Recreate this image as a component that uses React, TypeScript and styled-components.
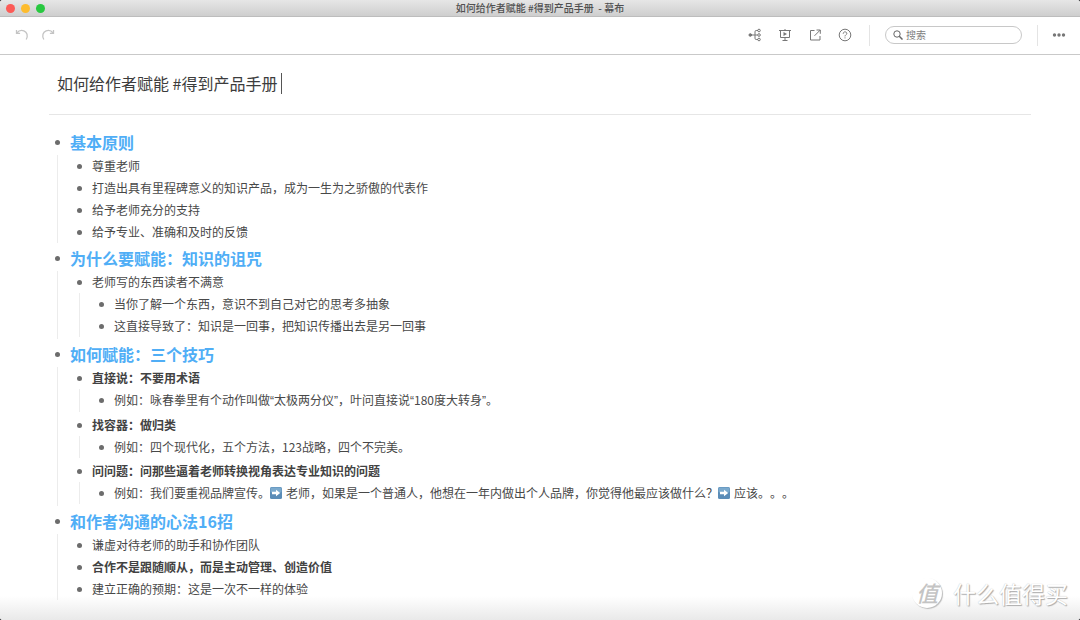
import React from "react";
import styled, { createGlobalStyle } from "styled-components";

const GlobalStyle = createGlobalStyle`
  * { box-sizing: border-box; }
  body {
    margin: 0;
    background: #2b2b2f;
    color: #444;
    font-family: "Noto Sans CJK SC", "Noto Sans", sans-serif;
    font-size: 12px;
    text-spacing-trim: space-all;
  }
`;

const Window = styled.div`
  position: relative;
  display: flex;
  flex-direction: column;
  min-height: 100vh;
  border-radius: 3px;
  overflow: hidden;
  background: #fff;
`;

const TitleBar = styled.header`
  display: grid;
  grid-template-columns: 1fr auto 1fr;
  align-items: center;
  height: 17px;
  padding: 0 6px;
  background: linear-gradient(#e6e6e6, #cecece);
  border-bottom: 1px solid #bdbdbd;
`;

const Lights = styled.div`
  display: flex;
  gap: 6px;
`;

const Light = styled.button<{ $color: string }>`
  width: 9px;
  height: 9px;
  padding: 0;
  border: 0;
  border-radius: 50%;
  background: ${(p) => p.$color};
`;

const WindowTitle = styled.span`
  font-size: 10px;
  font-weight: 500;
  line-height: 16px;
  color: #505050;
  white-space: pre;
`;

const Toolbar = styled.div`
  display: flex;
  align-items: center;
  justify-content: space-between;
  height: 38px;
  padding: 0 13px 1px 14px;
  border-bottom: 1px solid #c9c9c9;
`;

const ToolGroup = styled.div<{ $gap: number }>`
  display: flex;
  align-items: center;
  gap: ${(p) => p.$gap}px;
`;

const Actions = styled(ToolGroup)`
  padding-right: 3px;
`;

const IconButton = styled.button<{ $muted?: boolean }>`
  display: flex;
  width: 16px;
  height: 16px;
  padding: 1px;
  border: 0;
  background: none;
  color: ${(p) => (p.$muted ? "#c4c4c4" : "#777")};

  svg {
    width: 14px;
    height: 14px;
    fill: none;
    stroke: currentColor;
  }
`;

const Divider = styled.span`
  width: 1px;
  height: 21px;
  background: #e4e4e4;
`;

const Search = styled.label`
  display: flex;
  align-items: center;
  gap: 3px;
  width: 137px;
  height: 18px;
  padding: 0 8px 0 7px;
  border: 1px solid #c8c8c8;
  border-radius: 9px;
  color: #666;

  svg {
    flex: none;
    width: 10px;
    height: 10px;
    fill: none;
    stroke: currentColor;
  }
`;

const SearchInput = styled.input`
  flex: 1;
  min-width: 0;
  padding: 0;
  border: 0;
  outline: 0;
  background: none;
  font: inherit;
  font-size: 10px;
  line-height: 16px;

  &::placeholder {
    color: #808080;
    opacity: 1;
  }
`;

const Page = styled.main`
  flex: 1;
  padding: 0 49px 12px;
  background: linear-gradient(to top, #e9e9e9, #fff 24px);
`;

const DocTitle = styled.h1`
  display: flex;
  align-items: center;
  gap: 4px;
  height: 60px;
  margin: 0;
  padding: 0 8px 3px;
  border-bottom: 1px solid #e6e6e6;
  font-size: 16px;
  font-weight: 400;
  line-height: 24px;
  color: #3c3c3c;
`;

const Caret = styled.span`
  width: 1px;
  height: 21px;
  background: #555;
`;

const Outline = styled.ul`
  margin: 0;
  padding: 15px 0 0 6px;
  list-style: none;
`;

const Branch = styled.ul<{ $nested: boolean }>`
  display: flow-root;
  margin: ${(p) => (p.$nested ? "0 0 2px 2px" : "1px 0 3px 2px")};
  padding: 0 0 0 19px;
  border-left: 1px solid #ececec;
  list-style: none;
`;

const Row = styled.div<{ $heading: boolean; $bold?: boolean }>`
  display: flex;
  align-items: center;
  gap: 10px;
  font-size: ${(p) => (p.$heading ? 16 : 12)}px;
  line-height: ${(p) => (p.$heading ? 24 : 22)}px;
  font-weight: ${(p) => (p.$heading || p.$bold ? 700 : 400)};
  color: ${(p) => (p.$heading ? "#50aef6" : p.$bold ? "#424242" : "#484848")};

  &::before {
    content: "";
    flex: none;
    width: 5px;
    height: 5px;
    border-radius: 50%;
    background: #6c6c6c;
  }
`;

const Quote = styled.span`
  font-family: "Liberation Sans", sans-serif;
`;

const ArrowSvg = styled.svg`
  width: 12px;
  height: 12px;
  margin-right: 4px;
  vertical-align: -1px;
`;

const Watermark = styled.div`
  position: absolute;
  right: 12px;
  bottom: 12px;
  display: flex;
  align-items: center;
  gap: 11px;
  color: #fff;
  font-size: 23px;
  line-height: 30px;
  text-shadow: 1px 1px 1px #aaa, 0 0 1px #bbb;
`;

const Seal = styled.span`
  width: 30px;
  height: 30px;
  border-radius: 50%;
  background: #fff;
  box-shadow: 1px 1px 1px #bbb;
  color: #c4c4c4;
  font-size: 22px;
  font-weight: 500;
  line-height: 28px;
  text-align: center;
  text-shadow: none;
  font-style: italic;
`;

const Arrow = () => (
  <ArrowSvg viewBox="0 0 12 12" role="img" aria-label="➡️">
    <rect width="12" height="12" rx="1.5" fill="#5b8db8" />
    <rect x="0.5" y="0.5" width="11" height="5" rx="1" fill="#7aa9cd" />
    <path d="M2 4.8h4V2.8L10.2 6 6 9.2v-2H2z" fill="#fff" />
  </ArrowSvg>
);

const q = (text: string) => <Quote>{text}</Quote>;

type Node = { text: React.ReactNode; bold?: boolean; children?: Node[] };

const outline: Node[] = [
  {
    text: "基本原则",
    children: [
      { text: "尊重老师" },
      { text: "打造出具有里程碑意义的知识产品，成为一生为之骄傲的代表作" },
      { text: "给予老师充分的支持" },
      { text: "给予专业、准确和及时的反馈" },
    ],
  },
  {
    text: "为什么要赋能：知识的诅咒",
    children: [
      {
        text: "老师写的东西读者不满意",
        children: [
          { text: "当你了解一个东西，意识不到自己对它的思考多抽象" },
          { text: "这直接导致了：知识是一回事，把知识传播出去是另一回事" },
        ],
      },
    ],
  },
  {
    text: "如何赋能：三个技巧",
    children: [
      {
        text: "直接说：不要用术语",
        bold: true,
        children: [
          {
            text: (
              <>
                例如：咏春拳里有个动作叫做{q("“")}太极两分仪{q("”")}，叶问直接说{q("“")}
                180度大转身{q("”")}。
              </>
            ),
          },
        ],
      },
      {
        text: "找容器：做归类",
        bold: true,
        children: [{ text: "例如：四个现代化，五个方法，123战略，四个不完美。" }],
      },
      {
        text: "问问题：问那些逼着老师转换视角表达专业知识的问题",
        bold: true,
        children: [
          {
            text: (
              <>
                例如：我们要重视品牌宣传。
                <Arrow />
                老师，如果是一个普通人，他想在一年内做出个人品牌，你觉得他最应该做什么？
                <Arrow />
                应该。。。
              </>
            ),
          },
        ],
      },
    ],
  },
  {
    text: "和作者沟通的心法16招",
    children: [
      { text: "谦虚对待老师的助手和协作团队" },
      { text: "合作不是跟随顺从，而是主动管理、创造价值", bold: true },
      { text: "建立正确的预期：这是一次不一样的体验" },
    ],
  },
];

const Item = ({ node, level }: { node: Node; level: number }) => (
  <li>
    <Row $heading={level === 0} $bold={node.bold}>
      <span>{node.text}</span>
    </Row>
    {node.children && (
      <Branch $nested={level > 0}>
        {node.children.map((child, i) => (
          <Item key={i} node={child} level={level + 1} />
        ))}
      </Branch>
    )}
  </li>
);

export default function App() {
  return (
    <>
      <GlobalStyle />
      <Window>
        <TitleBar>
          <Lights>
            <Light $color="#fc5b57" aria-label="关闭" />
            <Light $color="#fdbc2e" aria-label="最小化" />
            <Light $color="#28c840" aria-label="缩放" />
          </Lights>
          <WindowTitle>{"如何给作者赋能 #得到产品手册  - 幕布"}</WindowTitle>
        </TitleBar>
        <Toolbar>
          <ToolGroup $gap={10}>
            <IconButton $muted aria-label="撤销">
              <svg viewBox="0 0 14 14" strokeWidth="1.3">
                <path d="M1.5 2v3.4h3.6M1.8 5.2C3.4 3 6.2 1.9 8.9 2.9c3.2 1.2 4.4 5 2.3 8.6" />
              </svg>
            </IconButton>
            <IconButton $muted aria-label="重做">
              <svg viewBox="0 0 14 14" strokeWidth="1.3">
                <path d="M12.5 2v3.4H8.9M12.2 5.2C10.6 3 7.8 1.9 5.1 2.9 1.9 4.1.7 7.9 2.8 11.5" />
              </svg>
            </IconButton>
          </ToolGroup>
          <ToolGroup $gap={13}>
            <Actions $gap={14}>
              <IconButton aria-label="思维导图">
                <svg viewBox="0 0 14 14">
                  <circle cx="2.3" cy="7" r="1.3" fill="currentColor" />
                  <path d="M3 7h6.5M10 2.5H8.2Q7 2.5 7 3.7v6.6q0 1.2 1.2 1.2H10" />
                  <circle cx="11" cy="2.5" r="1.3" />
                  <circle cx="11" cy="7" r="1.3" />
                  <circle cx="11" cy="11.5" r="1.3" />
                </svg>
              </IconButton>
              <IconButton aria-label="演示">
                <svg viewBox="0 0 14 14">
                  <path d="M1 2.5h12M2.5 2.5v7h9v-7M7 1v1.5M7 9.5v3M4.5 12.5h5" />
                  <path d="M5.5 3.9v4.2L9 6z" fill="currentColor" stroke="none" />
                </svg>
              </IconButton>
              <IconButton aria-label="分享">
                <svg viewBox="0 0 14 14">
                  <path d="M6.5 2.5h-4v9.500h9.500V8M8.500 2h3.800v3.800M12.200 2.100 6.500 7.800" />
                </svg>
              </IconButton>
              <IconButton aria-label="帮助">
                <svg viewBox="0 0 14 14">
                  <circle cx="7" cy="7" r="5.8" />
                  <path d="M5.2 5.7c0-2.4 3.6-2.4 3.6-.2C8.8 6.800 7 6.800 7 8.400M7 9.400v1" />
                </svg>
              </IconButton>
            </Actions>
            <ToolGroup $gap={15}>
              <Divider />
              <Search>
                <svg viewBox="0 0 10 10">
                  <circle cx="4" cy="4" r="3.2" />
                  <path d="m6.3 6.3 3.2 3.2" strokeWidth="1.5" />
                </svg>
                <SearchInput type="search" placeholder="搜索" aria-label="搜索" />
              </Search>
              <Divider />
            </ToolGroup>
            <IconButton aria-label="更多">
              <svg viewBox="0 0 14 14">
                <g fill="currentColor" stroke="none">
                  <circle cx="2.5" cy="7" r="1.7" />
                  <circle cx="7" cy="7" r="1.7" />
                  <circle cx="11.5" cy="7" r="1.7" />
                </g>
              </svg>
            </IconButton>
          </ToolGroup>
        </Toolbar>
        <Page>
          <DocTitle>
            如何给作者赋能 #得到产品手册
            <Caret />
          </DocTitle>
          <Outline>
            {outline.map((node, i) => (
              <Item key={i} node={node} level={0} />
            ))}
          </Outline>
        </Page>
        <Watermark>
          <Seal>值</Seal>
          <span>什么值得买</span>
        </Watermark>
      </Window>
    </>
  );
}
